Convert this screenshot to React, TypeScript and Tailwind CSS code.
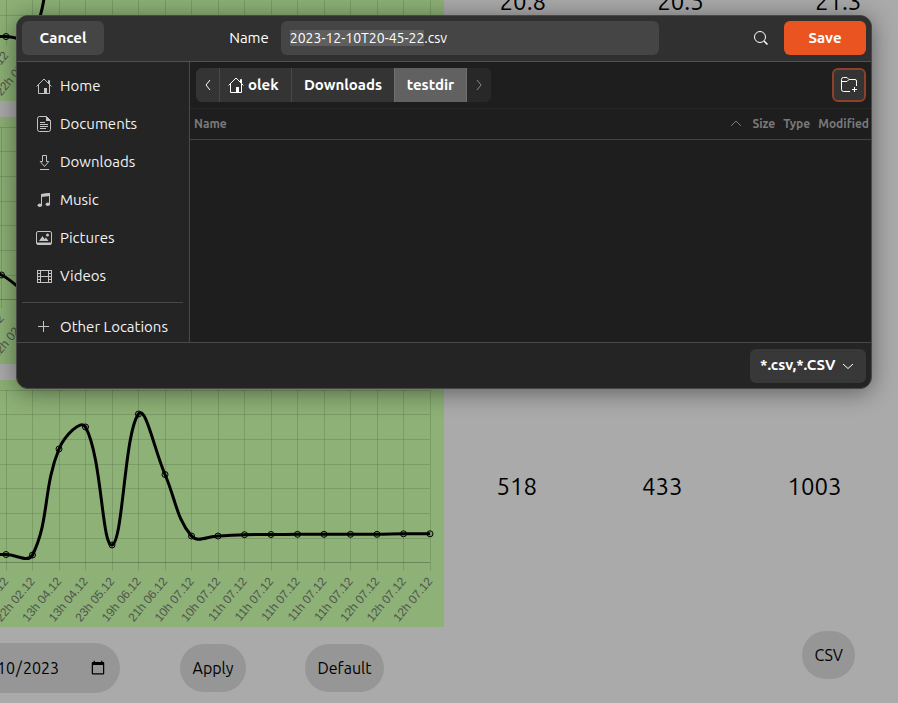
import { useEffect, useRef } from "react";
import type { ReactNode } from "react";

type Point = { x: number; y: number };

const CHART_HEIGHT = 247;
const STEP = 26.5;

function smoothPath(points: Point[], tension = 0.4) {
  const handles = points.map((cur, i) => {
    const prev = points[i - 1] ?? cur;
    const next = points[i + 1] ?? cur;
    const before = Math.hypot(cur.x - prev.x, cur.y - prev.y);
    const after = Math.hypot(next.x - cur.x, next.y - cur.y);
    const total = before + after || 1;
    const a = (tension * before) / total;
    const b = (tension * after) / total;
    const dx = next.x - prev.x;
    const dy = next.y - prev.y;
    return {
      inX: cur.x - a * dx,
      inY: cur.y - a * dy,
      outX: cur.x + b * dx,
      outY: cur.y + b * dy,
    };
  });
  return points
    .map((p, i) => {
      if (i === 0) return `M${p.x} ${p.y}`;
      const from = handles[i - 1];
      const to = handles[i];
      return `C${from.outX} ${from.outY} ${to.inX} ${to.inY} ${p.x} ${p.y}`;
    })
    .join(" ");
}

type ChartProps = {
  title: string;
  firstX: number;
  rows: number[];
  lead: number;
  values: number[];
  labels: string[];
};

function Chart({ title, firstX, rows, lead, values, labels }: ChartProps) {
  const points = values.map((y, i) => ({ x: firstX + i * STEP, y }));
  const bottom = rows[rows.length - 1];
  return (
    <svg
      role="img"
      aria-label={title}
      width="444"
      height={CHART_HEIGHT}
      viewBox={`0 0 444 ${CHART_HEIGHT}`}
      className="block shrink-0 bg-[#8db176]"
    >
      <g stroke="#000" strokeOpacity="0.12" strokeWidth="1">
        {rows.map((y) => (
          <line key={y} x1="0" x2="430" y1={y} y2={y} />
        ))}
        <line x1="0" x2="430" y1={bottom} y2={bottom} />
        {Array.from({ length: 17 }, (_, i) => Math.floor(firstX + i * STEP) + 0.5)
          .filter((x) => x < 431)
          .map((x) => (
            <line key={x} x1={x} x2={x} y1="10" y2="191" />
          ))}
      </g>
      <path d={smoothPath([{ x: firstX - STEP, y: lead }, ...points])} fill="none" stroke="#000" strokeWidth="3" />
      <g fill="#000" fillOpacity="0.1" stroke="#000" strokeWidth="1">
        {points.map((p) => (
          <circle key={p.x} cx={p.x} cy={p.y} r="3" />
        ))}
      </g>
      <g fill="#505450" fontSize="12" fontFamily="'Liberation Sans', Arial, sans-serif" textAnchor="end">
        {labels.map((label, i) => (
          <text
            key={i}
            dominantBaseline="central"
            transform={`translate(${firstX + i * STEP} 199) rotate(-50)`}
          >
            {label}
          </text>
        ))}
      </g>
    </svg>
  );
}

const DATES = [
  "22h 02.12", "22h 02.12", "13h 04.12", "13h 04.12", "23h 05.12", "19h 06.12",
  "21h 06.12", "10h 07.12", "10h 07.12", "11h 07.12", "11h 07.12", "11h 07.12",
  "11h 07.12", "11h 07.12", "12h 07.12", "12h 07.12", "12h 07.12",
];

const GRID_ROWS = [10.5, 34.5, 59.5, 84.5, 108.5, 133.5, 158.5, 182.5];

function Icon({ children, size = 16 }: { children: ReactNode; size?: number }) {
  return (
    <svg
      width={size}
      height={size}
      viewBox={`0 0 ${size} ${size}`}
      fill="none"
      stroke="currentColor"
      aria-hidden="true"
      className="shrink-0"
    >
      {children}
    </svg>
  );
}

const HomeIcon = () => (
  <Icon>
    <path d="M.6 8.4 8 1l7.4 7.4M2.5 7v8.5h11V7M12.5 5V2.5h1V6" />
    <path d="M8 10h3v5.5H8z" fill="currentColor" stroke="none" />
  </Icon>
);

const DocumentIcon = () => (
  <Icon>
    <path d="M10.5.5h-7a2 2 0 0 0-2 2v11a2 2 0 0 0 2 2h9a2 2 0 0 0 2-2v-9z" />
    <path d="M10 0v5h5z" fill="currentColor" stroke="none" />
    <path d="M4 6.5h5M4 8.5h8M4 10.5h8M4 12.5h6" />
  </Icon>
);

const DownloadIcon = () => (
  <Icon>
    <path d="M6.500 1.500h4v6h2.300L8.500 12.500 4.200 7.500h2.300zM4 15.500h9" />
  </Icon>
);

const MusicIcon = () => (
  <Icon>
    <path d="M5.500 13V2.500l8-1V12" />
    <path d="M5 2l9-1v3L5 5z" fill="currentColor" stroke="none" />
    <ellipse cx="3.800" cy="13.200" rx="2.200" ry="1.800" fill="currentColor" stroke="none" />
    <ellipse cx="11.800" cy="12.200" rx="2.200" ry="1.800" fill="currentColor" stroke="none" />
  </Icon>
);

const PictureIcon = () => (
  <Icon>
    <rect x=".5" y="1.500" width="15" height="13" rx="1.500" />
    <path d="M1 12.500h14v2H1zM3 11l3.500-5 2 3L10 7.500l2.500 3.500z" fill="currentColor" stroke="none" />
    <circle cx="11.500" cy="5" r="1.500" fill="currentColor" stroke="none" />
  </Icon>
);

const VideoIcon = () => (
  <Icon>
    <path d="M1.500 2v13M15.500 2v13M1 2.500h15M1 14.500h15M4.500 2v13M12.500 2v13M4.500 8.500h8M1.500 5.500h3M1.500 8.500h3M1.500 11.500h3M12.500 5.500h3M12.500 8.500h3M12.500 11.500h3" />
  </Icon>
);

const PlusIcon = () => (
  <Icon>
    <path d="M7.500 2v11M2 7.500h11" />
  </Icon>
);

const PLACES = [
  { name: "Home", icon: <HomeIcon /> },
  { name: "Documents", icon: <DocumentIcon /> },
  { name: "Downloads", icon: <DownloadIcon /> },
  { name: "Music", icon: <MusicIcon /> },
  { name: "Pictures", icon: <PictureIcon /> },
  { name: "Videos", icon: <VideoIcon /> },
];

function Place({ name, icon }: { name: string; icon: ReactNode }) {
  return (
    <button type="button" className="flex h-[38px] w-full shrink-0 items-center gap-2 pl-[19px] text-left text-[#f2f2f2]">
      <span className="text-[#c4c4c4]">{icon}</span>
      {name}
    </button>
  );
}

function SaveDialog() {
  const nameRef = useRef<HTMLInputElement>(null);

  useEffect(() => {
    nameRef.current?.focus();
    nameRef.current?.setSelectionRange(0, 19);
  }, []);

  return (
    <div
      role="dialog"
      aria-label="Save file"
      className="absolute top-[15px] right-[26px] left-4 overflow-hidden rounded-xl border border-[#484848] bg-[#242424] text-[15px] text-white shadow-[0_3px_24px_rgba(0,0,0,0.45)]"
    >
      <header className="flex h-[46px] items-start border-b border-[#515151] bg-[#303030] px-[5px] pt-[5px]">
        <div className="w-[129px]">
          <button type="button" className="h-[34px] w-[82px] rounded-md bg-[#454545] font-bold">
            Cancel
          </button>
        </div>
        <div className="flex flex-1 items-center justify-center gap-3">
          <label htmlFor="file-name">Name</label>
          <input
            id="file-name"
            ref={nameRef}
            defaultValue="2023-12-10T20-45-22.csv"
            className="h-[34px] w-[378px] rounded-md bg-[#454545] px-[9px] text-sm outline-none selection:bg-[#5e5e5e] selection:text-white"
          />
        </div>
        <div className="flex w-[129px] items-center justify-end gap-[15px]">
          <button type="button" aria-label="Search">
            <Icon>
              <circle cx="7" cy="7" r="5.500" />
              <path d="m11 11 3.500 3.500" strokeWidth="1.500" />
            </Icon>
          </button>
          <button type="button" className="h-[34px] w-[82px] rounded-md bg-[#e95420] font-bold">
            Save
          </button>
        </div>
      </header>

      <div className="flex h-[280px]">
        <nav aria-label="Places" className="flex w-[173px] shrink-0 flex-col overflow-hidden border-r border-[#484848] pt-[5px]">
          {PLACES.map((place) => (
            <Place key={place.name} {...place} />
          ))}
          <hr className="mr-[6px] ml-[5px] mt-[7px] mb-[5px] border-[#484848]" />
          <Place name="Other Locations" icon={<PlusIcon />} />
        </nav>

        <main className="min-w-0 flex-1 bg-[#1e1e1e]">
          <div className="flex h-[47px] items-center justify-between border-b border-[#272727] pr-[5px] pl-[6px]">
            <div className="flex h-[34px] overflow-hidden rounded-md bg-[#343434] font-bold">
              <button type="button" aria-label="Back" className="flex w-[23px] items-center justify-center">
                <Icon>
                  <path d="M10 3 6 8l4 5" />
                </Icon>
              </button>
              <button type="button" className="flex w-[72px] items-center gap-1 border-l border-[#484848] pl-2">
                <HomeIcon />
                olek
              </button>
              <button type="button" className="w-[103px] border-l border-[#484848]">
                Downloads
              </button>
              <button type="button" className="w-[73px] border-x border-[#707070] bg-[#616161]">
                testdir
              </button>
              <button type="button" aria-label="Forward" className="flex w-6 items-center justify-center bg-[#282828] text-[#8a8a8a]">
                <Icon>
                  <path d="m6 3 4 5-4 5" />
                </Icon>
              </button>
            </div>
            <button
              type="button"
              aria-label="Create folder"
              className="flex size-[34px] items-center justify-center rounded-md border-2 border-[#8c4228] bg-[#343434]"
            >
              <Icon size={18}>
                <path d="M10 15.500H3.500a2 2 0 0 1-2-2v-10a2 2 0 0 1 2-2H7l2 2h6a1.500 1.500 0 0 1 1.500 1.500v5M1.500 5.500H7l2-2M14.500 11v5M12 13.500h5" />
              </Icon>
            </button>
          </div>
          <table className="w-full text-left text-xs text-[#797979]">
            <thead>
              <tr className="h-[30px] border-b border-[#424242]">
                <th className="w-full pl-1">
                  <span className="flex items-center justify-between">
                    Name
                    <Icon>
                      <path d="m3 10 5-5 5 5" />
                    </Icon>
                  </span>
                </th>
                <th className="pl-2">Size</th>
                <th className="pl-2">Type</th>
                <th className="pr-[2px] pl-2">Modified</th>
              </tr>
            </thead>
          </table>
        </main>
      </div>

      <footer className="flex h-[46px] items-center justify-end border-t border-[#484848] px-[5px]">
        <div className="relative">
          <select
            aria-label="File type"
            className="h-[34px] w-[116px] appearance-none rounded-md bg-[#383838] pl-[10px] font-bold outline-none"
          >
            <option>*.csv,*.CSV</option>
          </select>
          <span className="pointer-events-none absolute inset-y-0 right-[10px] flex items-center">
            <Icon>
              <path d="m3 6 5 4.500L13 6" />
            </Icon>
          </span>
        </div>
      </footer>
    </div>
  );
}

function ReadingRow({ values, className }: { values: string[]; className: string }) {
  return (
    <div className={`flex items-center justify-around text-2xl ${className}`}>
      {values.map((value) => (
        <span key={value}>{value}</span>
      ))}
    </div>
  );
}

export default function App() {
  return (
    <div className="relative h-screen overflow-hidden bg-[#aaaaaa] font-['Ubuntu','Noto_Sans',sans-serif] text-black">
      <div className="-mt-[146px] flex flex-col gap-4">
        <section className="flex">
          <Chart
            title="Temperature"
            firstX={6}
            rows={[119.5, 140.5, 161.5, 182.5]}
            lead={182.5}
            values={[182.5, 182.5, 75, 50]}
            labels={DATES.slice(0, 2)}
          />
          <ReadingRow values={["20.8", "20.5", "21.3"]} className="-mr-[19px] flex-1 pt-12" />
        </section>
        <section className="flex">
          <Chart
            title="Humidity"
            firstX={1.5}
            rows={GRID_ROWS}
            lead={150}
            values={[158, 176, 182]}
            labels={DATES.slice(0, 2)}
          />
        </section>
        <section className="flex">
          <Chart
            title="CO2"
            firstX={6}
            rows={GRID_ROWS}
            lead={174}
            values={[
              174.5, 175, 69, 47, 165, 34, 94.5, 156, 156, 154.7, 154.5,
              154.3, 154.3, 154.3, 154.3, 153.8, 153.8,
            ]}
            labels={DATES}
          />
          <ReadingRow values={["518", "433", "1003"]} className="mr-1 flex-1 pb-[34px]" />
        </section>
      </div>

      <div className="mt-1 flex items-center">
        <input
          type="date"
          aria-label="End date"
          defaultValue="2023-12-10"
          className="-ml-[42px] h-[50px] w-[162px] rounded-full bg-[#969696] px-3"
        />
        <button type="button" className="ml-[60px] h-12 w-[66px] rounded-full bg-[#969696]">
          Apply
        </button>
        <button type="button" className="ml-[59px] h-12 w-[79px] rounded-full bg-[#969696]">
          Default
        </button>
        <button type="button" className="mr-[43px] mb-[26px] ml-auto h-12 rounded-full bg-[#969696] px-3">
          CSV
        </button>
      </div>

      <SaveDialog />
    </div>
  );
}
